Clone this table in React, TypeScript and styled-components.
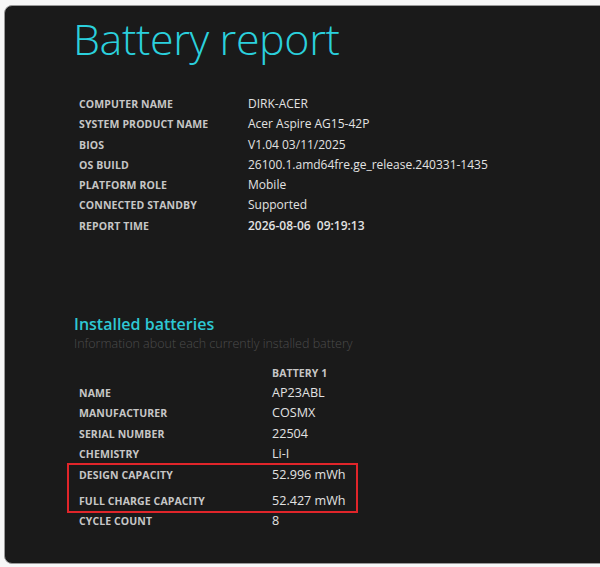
import styled, { createGlobalStyle } from "styled-components";

const GlobalStyle = createGlobalStyle`
  html, body {
    margin: 0;
    padding: 0;
    background: #f7f7f7;
    overflow: hidden;
  }
  body {
    font-family: "Open Sans", "Noto Sans", sans-serif;
  }
`;

const Page = styled.div`
  padding: 5px 0 0 4px;
  height: 567px;
  box-sizing: border-box;
`;

const Panel = styled.div`
  width: 620px;
  height: 559px;
  box-sizing: border-box;
  background: #1a1a1a;
  border: 1px solid #9a9a9a;
  border-radius: 8px;
  padding: 7px 0 0 68px;
`;

const Title = styled.h1`
  margin: 0;
  font-weight: 300;
  font-size: 43px;
  line-height: 52px;
  letter-spacing: -0.4px;
  color: #2bd0dd;
`;

const Row = styled.div<{ labelWidth: number; rowHeight?: number }>`
  display: grid;
  grid-template-columns: ${(p) => p.labelWidth}px auto;
  align-items: baseline;
  line-height: ${(p) => p.rowHeight ?? 20.3}px;
`;

const Label = styled.div`
  font-weight: 700;
  font-size: 10.5px;
  color: #c6c6c6;
  letter-spacing: 0.1px;
  white-space: nowrap;
`;

const Value = styled.div<{ strong?: boolean; size?: number }>`
  font-weight: ${(p) => (p.strong ? 600 : 400)};
  font-size: ${(p) => p.size ?? 12}px;
  color: #e2e2e2;
  white-space: nowrap;
`;

const SystemTable = styled.div`
  margin: 29px 0 0 6px;
`;

const SectionTitle = styled.h2`
  margin: 77px 0 0 1px;
  font-weight: 600;
  font-size: 16px;
  line-height: 22px;
  color: #2ec8d4;
`;

const SectionNote = styled.div`
  margin-left: 1px;
  font-weight: 300;
  font-size: 12.5px;
  line-height: 18px;
  color: #4c4c4c;
`;

const BatteryTable = styled.div`
  margin: 10px 0 0 6px;
`;

const Highlight = styled.div`
  width: 291px;
  box-sizing: border-box;
  margin: -1px 0 -2px -12px;
  padding-left: 10px;
  border: 2px solid #e0252a;
  display: flex;
  flex-direction: column;
  gap: 5.8px;
`;

const systemRows: [string, string, boolean?][] = [
  ["COMPUTER NAME", "DIRK-ACER"],
  ["SYSTEM PRODUCT NAME", "Acer Aspire AG15-42P"],
  ["BIOS", "V1.04 03/11/2025"],
  ["OS BUILD", "26100.1.amd64fre.ge_release.240331-1435"],
  ["PLATFORM ROLE", "Mobile"],
  ["CONNECTED STANDBY", "Supported"],
  ["REPORT TIME", "2026-08-06\u00a0\u00a009:19:13", true],
];

const batteryRows: [string, string][] = [
  ["NAME", "AP23ABL"],
  ["MANUFACTURER", "COSMX"],
  ["SERIAL NUMBER", "22504"],
  ["CHEMISTRY", "Li-I"],
];

const capacityRows: [string, string][] = [
  ["DESIGN CAPACITY", "52.996 mWh"],
  ["FULL CHARGE CAPACITY", "52.427 mWh"],
];

function BatteryRow({ label, value }: { label: string; value: string }) {
  return (
    <Row labelWidth={193} rowHeight={20.2}>
      <Label>{label}</Label>
      <Value size={12.6}>{value}</Value>
    </Row>
  );
}

export default function App() {
  return (
    <>
      <GlobalStyle />
      <Page>
        <Panel>
          <Title>Battery report</Title>

          <SystemTable>
            {systemRows.map(([label, value, strong]) => (
              <Row key={label} labelWidth={169}>
                <Label>{label}</Label>
                <Value strong={strong}>{value}</Value>
              </Row>
            ))}
          </SystemTable>

          <SectionTitle>Installed batteries</SectionTitle>
          <SectionNote>Information about each currently installed battery</SectionNote>

          <BatteryTable>
            <Row labelWidth={193} rowHeight={20.2}>
              <span />
              <Label>BATTERY 1</Label>
            </Row>
            {batteryRows.map(([label, value]) => (
              <BatteryRow key={label} label={label} value={value} />
            ))}
            <Highlight>
              {capacityRows.map(([label, value]) => (
                <BatteryRow key={label} label={label} value={value} />
              ))}
            </Highlight>
            <BatteryRow label="CYCLE COUNT" value="8" />
          </BatteryTable>
        </Panel>
      </Page>
    </>
  );
}
